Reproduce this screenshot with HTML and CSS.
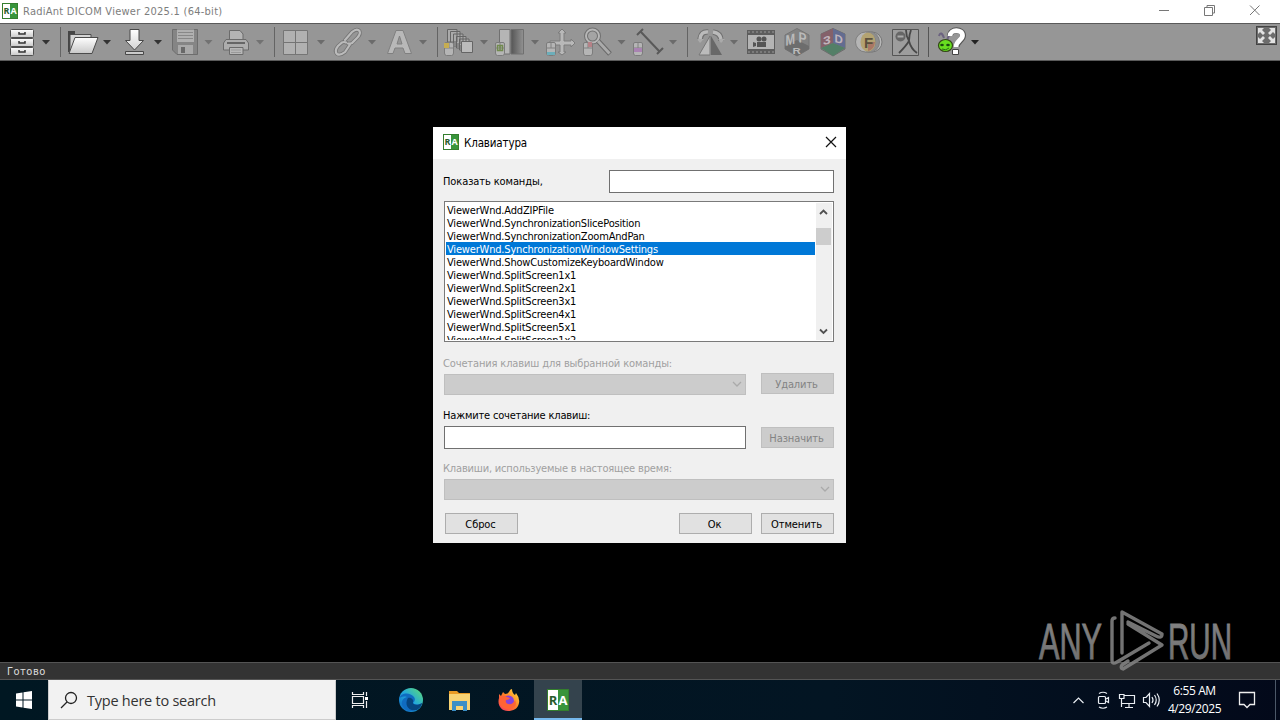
FILE: index.html
```html
<!DOCTYPE html>
<html lang="ru">
<head>
<meta charset="utf-8">
<title>RadiAnt DICOM Viewer</title>
<link rel="stylesheet" href="styles.css">
</head>
<body>
<svg width="0" height="0" class="defs">
  <defs>
    <path id="arr" d="M-4 -2H4L0 2.4Z"/>
    <g id="mouse"><path d="M.5 2Q.5 .5 2 .5H8Q9.500 .5 9.500 2V11Q9.500 13.500 7.500 13.500H2.500Q.5 13.500 .5 11Z" fill="#b5b5b5" stroke="#7c7c7c"/><path d="M5 .5V6M.5 6H9.500" stroke="#808080"/></g>
    <path id="chain" d="M345 40L352 32Q357 28 359.500 31Q361 34 357 38L352 43Q350 44 348 43.500M350 44.500L345 52Q340 56 337 54Q334 51 338 46L342 42.500Q344 41.500 346 42.500"/>
    <linearGradient id="gl" x2="0" y2="1"><stop stop-color="#fff"/><stop offset="1" stop-color="#c8c8c8"/></linearGradient>
    <linearGradient id="gd"><stop stop-color="#555"/><stop offset="1" stop-color="#929292"/></linearGradient>
    <linearGradient id="ed" x1="0" y1="1" x2="1" y2="0"><stop stop-color="#0c62bd"/><stop offset=".5" stop-color="#22a7dd"/><stop offset="1" stop-color="#61df70"/></linearGradient>
    <linearGradient id="ff" x1="0" y1="1" x2="1" y2="0"><stop stop-color="#f5336c"/><stop offset=".5" stop-color="#ff7b28"/><stop offset="1" stop-color="#ffe83c"/></linearGradient>
    <linearGradient id="wm" x2="0" y2="1"><stop stop-color="#858585"/><stop offset="1" stop-color="#6c6c6c"/></linearGradient>
  </defs>
</svg>
<div class="screen">
  <header class="titlebar">
    <span class="logo"><b>R</b><i>A</i></span>
    <span class="apptitle">RadiAnt DICOM Viewer 2025.1 (64-bit)</span>
    <svg class="winctl" width="130" height="23" fill="none" stroke="#777"><path d="M9 10.500H19M54.500 7.500H62.500V15.500H54.500ZM57 7V5.500H64.500V13H63M100 5.500L109.500 15M109.500 5.500L100 15"/></svg>
  </header>

  <nav class="toolbar">
    <svg width="58" viewBox="0 24 58 36"><g fill="url(#gl)" stroke="#505050"><rect x="10.500" y="29.500" width="23" height="8" rx="1"/><rect x="10.500" y="38.500" width="23" height="8" rx="1"/><rect x="10.500" y="47.500" width="23" height="8" rx="1"/></g><path d="M19 32V34H25V32M19 41V43H25V41M19 50V52H25V50" fill="none" stroke="#333" stroke-width="1.500"/><use href="#arr" x="46" y="42" fill="#333"/></svg>
    <svg width="58" viewBox="58 24 58 36"><path d="M60.500 27V57" stroke="#646464"/><path d="M68 31H75V34H91V52H68Z" fill="#454545"/><path d="M70 34.500H91V53H70Z" fill="#d4d4d4" stroke="#4e4e4e"/><path d="M75 37.500H98L92 53.500H69Z" fill="url(#gl)" stroke="#4b4b4b"/><use href="#arr" x="107" y="42" fill="#333"/></svg>
    <svg width="50" viewBox="116 24 50 36"><path d="M130 29.500H139V40.500H143.500L134.500 50L125.500 40.500H130ZM125.500 51.500H143.500V54.500H125.500Z" fill="url(#gl)" stroke="#484848"/><use href="#arr" x="158" y="42" fill="#333"/></svg>
    <svg width="54" viewBox="166 24 54 36"><path d="M172.500 29.500H197.500V54.500H177L172.500 50Z" fill="#858585" stroke="#6d6d6d"/><path d="M177 29.500H194V42H177Z" fill="#b0b0b0"/><path d="M178 32.500H193M178 35.500H193M178 38.500H193" stroke="#888"/><path d="M178 45H193V54H178Z" fill="#a9a9a9"/><path d="M181 47H185V53H181Z" fill="#696969"/><use href="#arr" x="208.500" y="42" fill="#727272"/></svg>
    <svg width="48" viewBox="220 24 48 36"><path d="M229.500 30.500H240L243 34V41H229.500Z" fill="#b4b4b4" stroke="#6b6b6b"/><path d="M226 39.500H246L248.500 43V50H223.500V43Z" fill="#adadad" stroke="#6b6b6b"/><path d="M227 43H245" stroke="#666" stroke-width="2"/><path d="M229.500 47.500H243V54.500H229.500Z" fill="#b7b7b7" stroke="#6b6b6b"/><path d="M231 50H241M231 52.500H241" stroke="#999"/><use href="#arr" x="260" y="42" fill="#727272"/></svg>
    <svg width="62" viewBox="268 24 62 36"><path d="M274.500 27V57" stroke="#646464"/><path d="M283.500 30.500H307.500V54.500H283.500Z" fill="#b1b1b1" stroke="#757575"/><path d="M295.500 31V54M284 42.500H307" stroke="#747474"/><use href="#arr" x="321" y="42" fill="#6b6b6b"/></svg>
    <svg width="52" viewBox="330 24 52 36"><g fill="none" stroke-linecap="round"><use href="#chain" stroke="#747474" stroke-width="3.800"/><use href="#chain" stroke="#bbb" stroke-width="2.200"/></g><use href="#arr" x="372" y="42" fill="#6b6b6b"/></svg>
    <svg width="50" viewBox="382 24 50 36"><path fill-rule="evenodd" d="M396 30.500H403L411.500 53.500H405L403 48H395L393 53.500H387.500ZM399.500 36L397 44H402Z" fill="#b8b8b8" stroke="#808080"/><use href="#arr" x="423" y="42" fill="#6b6b6b"/></svg>
    <svg width="58" viewBox="432 24 58 36"><path d="M437.500 27V57" stroke="#646464"/><g fill="#aaa" stroke="#656565"><path d="M447.500 29.500H457V42H447.500ZM450.500 31.500H460V44H450.500ZM453.500 34H463V46H453.500ZM456.500 36.500H466V48H456.500ZM459.500 39H469V50H459.500Z"/><path d="M461.500 41.500H472.500V52.500H461.500Z" fill="#bbb"/></g><use href="#mouse" x="444" y="42"/><path d="M444 43H449V48H444Z" fill="#c6ad51"/><use href="#arr" x="484" y="42" fill="#6b6b6b"/></svg>
    <svg width="52" viewBox="490 24 52 36"><path d="M499.500 29.500H510V54H499.500Z" fill="#b5b5b5" stroke="#707070"/><path d="M511 29.500H523.500V54H511Z" fill="url(#gd)" stroke="#707070"/><use href="#mouse" x="495" y="42"/><path d="M497.500 45.500H502.500V50.500H497.500ZM500 45V51" fill="none" stroke="#718a4e" stroke-width="1.500"/><use href="#arr" x="535" y="42" fill="#6b6b6b"/></svg>
    <svg width="36" viewBox="542 24 36 36"><path d="M562 29L566 33H564V41H571V39L575 43L571 47V45H564V52H566L562 55L558 52H560V45H550V41H560V33H558Z" fill="#b8b8b8" stroke="#7c7c7c"/><use href="#mouse" x="546" y="42"/><path d="M547 52H555V55H547Z" fill="#6caeba"/></svg>
    <svg width="50" viewBox="578 24 50 36"><circle cx="592.500" cy="36" r="6.500" fill="#a4a4a4" stroke="#707070" stroke-width="4"/><circle cx="592.500" cy="36" r="6.500" fill="none" stroke="#b7b7b7" stroke-width="2"/><path d="M598 41L610 54" stroke="#696969" stroke-width="5"/><path d="M598 41L609.500 53.500" stroke="#aaa" stroke-width="3"/><use href="#mouse" x="583" y="42"/><path d="M588 42H592V47H588Z" fill="#b58187"/><use href="#arr" x="621.500" y="42" fill="#6b6b6b"/></svg>
    <svg width="54" viewBox="628 24 54 36"><path d="M641 32L659 51M637 35L643 29M657 54L663 48" fill="none" stroke="#595959" stroke-width="2"/><use href="#mouse" x="633" y="42"/><path d="M634 48H642V52H634Z" fill="#a983b2"/><use href="#arr" x="673" y="42" fill="#6b6b6b"/></svg>
    <svg width="58" viewBox="682 24 58 36"><path d="M687.500 27V57" stroke="#646464"/><path d="M700 40Q701 31 708 32M713 32Q721 33 721 41" fill="none" stroke="#707070" stroke-width="5.500"/><path d="M700 39Q701 31 708 32M713 32Q720 33 721 39" fill="none" stroke="#bbb" stroke-width="3.500"/><path d="M710 36L710 55H699Z" fill="#bbb" stroke="#777"/><path d="M711 36L722 55H711Z" fill="#686868"/><path d="M697 39H704L700 43ZM718 39H725L721 43Z" fill="#aaa"/><use href="#arr" x="734" y="42" fill="#6b6b6b"/></svg>
    <svg width="40" viewBox="740 24 40 36"><path d="M747 30H775V54H747Z" fill="#5d5d5d"/><path d="M748 32H774M748 52H774" stroke="#858585" stroke-width="1.500" stroke-dasharray="2 2"/><path d="M748 35H774V49H748Z" fill="#b4b4b4"/><circle cx="759" cy="39" r="2.500" fill="#555"/><circle cx="764" cy="39" r="2.500" fill="#555"/><path d="M757 42H766V47H757ZM756 43L753 42V47L756 46Z" fill="#555"/></svg>
    <svg width="34" viewBox="780 24 34 36"><path d="M797 28.500L809 35V49L797 56L785 49V35Z" fill="#828282" stroke="#757575"/><path d="M785 46L797 40L809 46V49L797 56L785 49Z" fill="#6d6d6d"/><g class="cubet"><text transform="matrix(1.15 -.3 0 1.5 785.5 46)">M</text><text transform="matrix(1.2 .35 0 1.5 798.500 42)">P</text><text transform="matrix(1.15 0 0 .95 792.500 54)">R</text></g></svg>
    <svg width="36" viewBox="814 24 36 36"><path d="M833 28.500L845 34V49L833 56L821 49V34Z" fill="#7e7e7e" stroke="#6c6c6c"/><path d="M821 34L833 28.500V43L821 48Z" fill="#84616a"/><path d="M833 28.500L845 34V48L833 43Z" fill="#636c91"/><path d="M821 48L833 43L845 48L833 56Z" fill="#537f67"/><g class="cubet light"><text transform="matrix(1.4 -.3 0 1.15 823 45)">3</text><text transform="matrix(1.15 .3 0 1.15 834.500 42)">D</text></g></svg>
    <svg width="36" viewBox="850 24 36 36"><circle cx="872" cy="42" r="10" fill="#b8b8b8" stroke="#777"/><circle cx="869" cy="42" r="10.500" fill="#8e8e8e" stroke="#808080"/><circle cx="865.500" cy="42" r="10" fill="#b5b5b5" stroke="#808080"/><ellipse cx="868" cy="42" rx="7.500" ry="9.500" fill="#b3a372"/><path d="M868 42H875Q874 50 868 51Z" fill="#aa7765"/><text x="864" y="47.500" class="ftext">F</text></svg>
    <svg width="36" viewBox="886 24 36 36"><path d="M892.500 29.500H918.500V55.500H892.500Z" fill="#9d9d9d" stroke="#555"/><circle cx="900.500" cy="36.500" r="5" fill="#666"/><path d="M897.500 36.500H903.500" stroke="#aaa" stroke-width="2"/><path d="M906 30Q906 36 909 41Q911 49 917 53M911 30Q909 35 909 41Q906 46 899 53" fill="none" stroke="#484848" stroke-width="1.800"/></svg>
    <svg width="68" viewBox="922 24 68 36"><path d="M928.500 27V57" stroke="#555"/><path d="M939 36Q941 30 944 38M947 40L950 33" fill="none" stroke="#6c6380" stroke-width="2"/><path d="M950 36C950 28.500 963 28.500 963 35.500C963 40.500 956.500 41 956.500 47" fill="none" stroke="#555" stroke-width="6"/><path d="M950 36C950 29 962.500 29 962.500 35.500C962.500 40 956 41 956 47" fill="none" stroke="#fff" stroke-width="4.800"/><path d="M952.500 49.500H958.500V54.500H952.500Z" fill="#fff" stroke="#444"/><ellipse cx="945.500" cy="45.500" rx="7" ry="6" fill="#68df20" stroke="#354719" stroke-width="1.200"/><ellipse cx="942" cy="45" rx="1.800" ry="1.200" fill="#194b10"/><ellipse cx="948" cy="45" rx="1.800" ry="1.200" fill="#194b10"/><path d="M942 49Q946 51 949 48" fill="none" stroke="#267414"/><use href="#arr" x="975" y="42" fill="#222"/></svg>
    <svg class="full" width="22" height="20"><rect x=".5" y=".5" width="20" height="18" fill="#6c6c6c" stroke="#444"/><path d="M2 2H8L6 4L9 7L7 9L4 6L2 8ZM19 2V8L17 6L14 9L12 7L15 4L13 2ZM2 17V11L4 13L7 10L9 12L6 15L8 17ZM19 17H13L15 15L12 12L14 10L17 13L19 11Z" fill="#e2e2e2"/></svg>
  </nav>

  <main class="viewer">
    <section class="dialog">
      <div class="dhead">
        <span class="logo"><b>R</b><i>A</i></span><span class="dtitle">Клавиатура</span>
        <svg width="12" height="12" fill="none" stroke="#111" stroke-width="1.200"><path d="M1 1L11 11M11 1L1 11"/></svg>
      </div>
      <div class="dbody">
        <div class="filter"><span>Показать команды,</span><div class="field"></div></div>
        <div class="list">
          <ul>
            <li>ViewerWnd.AddZIPFile</li>
            <li>ViewerWnd.SynchronizationSlicePosition</li>
            <li>ViewerWnd.SynchronizationZoomAndPan</li>
            <li class="sel">ViewerWnd.SynchronizationWindowSettings</li>
            <li>ViewerWnd.ShowCustomizeKeyboardWindow</li>
            <li>ViewerWnd.SplitScreen1x1</li>
            <li>ViewerWnd.SplitScreen2x1</li>
            <li>ViewerWnd.SplitScreen3x1</li>
            <li>ViewerWnd.SplitScreen4x1</li>
            <li>ViewerWnd.SplitScreen5x1</li>
            <li>ViewerWnd.SplitScreen1x2</li>
          </ul>
          <div class="scroll">
            <svg width="15" height="25" fill="none" stroke="#505050" stroke-width="1.800"><path d="M4 11L7.500 7.500L11 11"/></svg>
            <div class="thumb"></div>
            <svg class="down" width="15" height="17" fill="none" stroke="#505050" stroke-width="1.800"><path d="M4 6.500L7.500 10L11 6.500"/></svg>
          </div>
        </div>
        <div class="label l1 dis">Сочетания клавиш для выбранной команды:</div>
        <div class="row r1"><div class="combo"><svg width="10" height="7"><path d="M1 1L5 5L9 1"/></svg></div><div class="btn off">Удалить</div></div>
        <div class="label l2">Нажмите сочетание клавиш:</div>
        <div class="row r2"><div class="input"></div><div class="btn off">Назначить</div></div>
        <div class="label l3 dis">Клавиши, используемые в настоящее время:</div>
        <div class="row r3"><div class="combo"><svg width="10" height="7"><path d="M1 1L5 5L9 1"/></svg></div></div>
        <div class="row r4"><div class="btn">Сброс</div><div class="btn ok">Ок</div><div class="btn">Отменить</div></div>
      </div>
    </section>
  </main>

  <footer class="status">Готово</footer>
  <div class="taskbar">
    <svg width="48" height="40" fill="#fff"><path d="M16 13.500L22.500 12.500V19.500H16ZM23.500 12.300L32 11V19.500H23.500ZM16 20.500H22.500V27.500L16 26.500ZM23.500 20.500H32V29L23.500 27.700Z"/></svg>
    <div class="search"><svg width="38" height="38" fill="none" stroke="#222" stroke-width="1.300"><circle cx="22" cy="17" r="5.500"/><path d="M18 21L12 27"/></svg><span>Type here to search</span></div>
    <svg width="50" height="40" fill="none" stroke="#eee" stroke-width="1.200"><path d="M16.500 12V14.500H27.500V12M16.500 28V25.500H27.500V28M16.500 16.500H27.500V23.500H16.500ZM30.500 12V16M30.500 21V28"/><path d="M29 17H32V20H29Z" fill="#fff" stroke="none"/></svg>
    <svg width="49" height="40"><circle cx="25" cy="20" r="12" fill="url(#ed)"/><path d="M13 19C15 12 24 12 28 17C30 20 28 22 27 23C30 26 35 24 36 23C32 33 20 33 17 27C14 22 17 18 21 17C17 16 14 17 13 19Z" fill="#106bc0"/><path d="M22 18C18 24 22 32 31 30C36 27 36 23 36 23C32 26 26 25 27 22C28 20 25 17 22 18Z" fill="#06447f"/></svg>
    <svg width="49" height="40"><path d="M14 11H22L24 13H35V30H14Z" fill="#e99b24"/><path d="M14 14H35V30H14Z" fill="#f8d373"/><path d="M17 21H32V31H28V26H21V31H17Z" fill="#3b8fc6"/><path d="M21 26H28V30H21Z" fill="#f8d373"/></svg>
    <svg width="50" height="40"><path d="M15 14L17 16L19 12L21 14Q24 14 25 12Q26 9 28 9Q28 13 31 15L32 13Q36 18 35 23C34 29 29 31 24 31C17 31 13 25 15 18Z" fill="url(#ff)"/><circle cx="24.500" cy="21" r="5.500" fill="#8542dc"/><path d="M16 17Q20 15 23 17L26 18Q25 20 22 20Q21 23 24 24Q29 25 31 20Q34 27 26 29Q18 30 15 23Z" fill="#ff6335"/></svg>
    <div class="active"><span class="logo big"><b>R</b><i>A</i></span></div>
    <div class="grow"></div>
    <svg width="100" height="40" viewBox="1068 680 100 40" fill="none" stroke="#e9edf2" stroke-width="1.200"><path d="M1073.500 703L1078.500 698L1083.500 703"/><rect x="1098.500" y="696.500" width="7" height="7" rx="1"/><path d="M1106 699L1108.500 697.500V702.500L1106 701M1099 693.500Q1103 691 1107 693.500M1099 707Q1103 709.500 1107 707M1124 695.500H1134.500V703.500H1121.500M1119.500 694.500H1124V698.500H1119.500ZM1129 704V707M1125 707.500H1133M1121.500 699V707M1143.500 697.500H1146L1149.500 693.500V706.500L1146 702.500H1143.500ZM1152 697Q1154 700 1152 703M1154.500 695Q1158 700 1154.500 705M1157 693.500Q1161.500 700 1157 706.500"/></svg>
    <div class="clock"><span>6:55 AM</span><span>4/29/2025</span></div>
    <svg width="59" height="40" viewBox="1221 680 59 40" fill="none" stroke="#eee" stroke-width="1.300"><path d="M1239.500 692.500H1254.500V704.500H1250L1247 707.500L1244 704.500H1239.500Z"/><path d="M1275.500 680V720" stroke="#4c5868" stroke-width="1"/></svg>
  </div>
  <svg class="mark" width="220" height="74" viewBox="1035 600 220 74"><g fill="url(#wm)" stroke="url(#wm)" stroke-width=".9" class="marktext"><text x="1039" y="659" textLength="63" lengthAdjust="spacingAndGlyphs">ANY</text><text x="1168" y="659" textLength="64" lengthAdjust="spacingAndGlyphs">RUN</text></g><g fill="none" stroke="#808080" stroke-width="3.400" stroke-linecap="round" stroke-linejoin="round" opacity=".9"><path d="M1115 618Q1112 618 1112 621V660Q1112 665 1117 662L1149 643M1122 653V612L1162 634Q1162 639 1156 636L1128 622M1128 624L1162 645L1123 669Q1120 668 1122 665L1128 661"/></g></svg>
</div>
</body>
</html>
```
FILE: styles.css
```css
* { box-sizing: border-box; }
body { margin: 0; background: #000; font-family: "DejaVu Sans Condensed", "DejaVu Sans", sans-serif; font-stretch: condensed; font-size: 11px; overflow: hidden; }
.defs { position: absolute; }
.screen { width: 1280px; height: 720px; display: flex; flex-direction: column; position: relative; white-space: nowrap; }
.titlebar { height: 23px; background: #fff; display: flex; align-items: center; padding-left: 2px; color: #7d7d7d; flex: none; }
.logo { display: flex; width: 16px; height: 16px; border: 1px solid #347e2e; background: linear-gradient(90deg, #fff 50%, #38943b 50%); font: bold 9px/14px "Open Sans", sans-serif; flex: none; }
.logo b, .logo i { width: 7px; text-align: center; font-style: normal; font-weight: 700; color: #285c2b; }
.logo i { color: #fff; }
.titlebar .logo { margin-top: -1px; }
.apptitle { margin: 0 0 0 5px; letter-spacing: .26px; }
.winctl { margin-left: auto; }
.toolbar { height: 38px; flex: none; display: flex; background: #969696; border: solid #5a5a5a; border-width: 1px 0; }
.toolbar svg { height: 36px; flex: none; }
.toolbar .full { height: 20px; margin: 2px 2px 0 auto; }
.cubet { font: bold 10px "Liberation Sans", sans-serif; fill: #bababa; }
.light { fill: #c0b4bc; }
.ftext { font: bold 15px "Liberation Sans", sans-serif; fill: #5c513d; }
.viewer { height: 601px; flex: none; padding: 66px 0 0 433px; background: #000; }
.dialog { width: 413px; height: 416px; background: #f0f0f0; letter-spacing: -.18px; }
.dialog .logo { letter-spacing: 0; }
.dhead { height: 32px; background: #fff; display: flex; align-items: center; padding: 0 9px 2px 10px; }
.dtitle { margin: 2px auto 0 5px; font-size: 11.500px; letter-spacing: -.15px; }
.dbody { padding: 11px 12px 0 11px; color: #000; }
.filter { display: flex; align-items: center; justify-content: space-between; height: 23px; }
.filter span { margin-left: -1px; letter-spacing: -.1px; }
.field { width: 225px; height: 23px; border: 1px solid #707070; background: #fff; }
.list { height: 141px; margin-top: 8px; border: 1px solid #7a7a7a; background: #fff; display: flex; padding: 1px; }
ul { list-style: none; width: 370px; margin: 0; padding: 0; overflow: hidden; }
li { height: 13px; line-height: 15px; padding-left: 1px; }
.sel { background: #0078d7; color: #fff; }
.scroll { width: 16px; margin-left: 1px; background: #f0f0f0; display: flex; flex-direction: column; }
.scroll svg { flex: none; }
.thumb { height: 17px; width: 15px; background: #cdcdcd; }
.scroll .down { margin-top: auto; }
.label { height: 14px; line-height: 16px; margin-left: -1px; }
.l1 { margin-top: 14px; letter-spacing: -.14px; }
.l2 { margin-top: 13px; }
.l3 { margin-top: 12px; }
.dis { color: #a0a0a0; }
.row { display: flex; justify-content: space-between; }
.r1 { margin-top: 3px; height: 22px; }
.r2 { margin-top: 4px; height: 23px; }
.r3 { margin-top: 4px; height: 21px; }
.r4 { margin-top: 13px; height: 21px; padding-left: 1px; }
.combo { width: 302px; height: 21px; margin-top: 1px; background: #ccc; border: 1px solid #bfbfbf; display: flex; justify-content: flex-end; align-items: center; padding-right: 3px; }
.r3 .combo { width: 100%; margin-top: 0; }
.combo path { fill: none; stroke: #aaa; stroke-width: 1.3; }
.input { width: 302px; height: 23px; border: 1px solid #707070; background: #fff; }
.btn { width: 73px; height: 21px; line-height: 21px; text-align: center; background: #e1e1e1; border: 1px solid #adadad; padding-right: 2px; letter-spacing: -.1px; }
.off { background: #ccc; border-color: #bfbfbf; color: #838383; }
.r2 .btn { margin-top: 1px; }
.ok { margin-left: auto; margin-right: 9px; }
.status { height: 18px; flex: none; background: #333; border: solid #545454; border-width: 1px 0; color: #ddd; padding-left: 7px; line-height: 17px; letter-spacing: .5px; }
.taskbar { height: 40px; flex: none; display: flex; background: linear-gradient(90deg, #001722, #031523 65%, #03091a); }
.taskbar svg { flex: none; }
.search { width: 288px; background: #f2f2f2; border: 1px solid #ccc; border-top-color: #f2f2f2; display: flex; align-items: center; color: #333; font: 14.500px "Open Sans", sans-serif; letter-spacing: -.24px; flex: none; }
.active { width: 48px; height: 40px; background: #34434d; border-bottom: 2px solid #76b9ed; display: flex; align-items: center; justify-content: center; padding-top: 1px; flex: none; }
.big { width: 22px; height: 22px; font-size: 13px; line-height: 20px; }
.big b, .big i { width: 10px; }
.grow { flex: 1; }
.clock { width: 53px; color: #fff; display: flex; flex-direction: column; align-items: center; font: 12px/18px "Open Sans", sans-serif; padding-top: 2px; letter-spacing: -.4px; }
.mark { position: absolute; left: 1035px; top: 600px; }
.marktext { font: 50px "Liberation Sans", sans-serif; }
```
